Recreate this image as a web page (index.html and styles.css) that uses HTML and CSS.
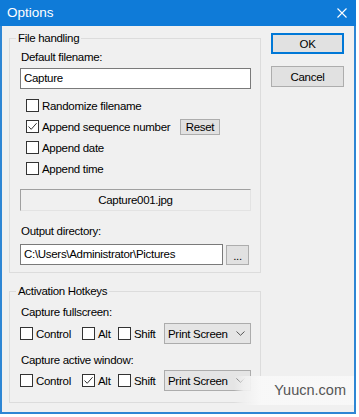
FILE: index.html
```html
<!DOCTYPE html>
<html lang="en">
<head>
<meta charset="UTF-8">
<title>Options</title>
<link rel="stylesheet" href="styles.css">
</head>
<body>
    <div class="window">
        <div class="titlebar">
            <span class="title">Options</span>
            <svg class="close" width="10" height="10" viewBox="0 0 10 10"><path d="M0.5 0.5 L9.5 9.5 M9.5 0.5 L0.5 9.5" stroke="#fff" stroke-width="1.1" fill="none"/></svg>
        </div>
        <div class="client">
            <div class="main">
                <fieldset class="group group-file">
                    <legend>File handling</legend>
                    <div class="label">Default filename:</div>
                    <div class="textbox">Capture</div>
                    <div class="options">
                        <div class="check-row"><span class="checkbox"></span><span>Randomize filename</span></div>
                        <div class="check-row"><span class="checkbox"><svg width="11" height="11" viewBox="0 0 11 11"><path d="M1.5 5.5 L4.2 8.3 L9.6 2.2" stroke="#333" stroke-width="1" fill="none"/></svg></span><span class="seq-label">Append sequence number</span><span class="btn btn-reset">Reset</span></div>
                        <div class="check-row"><span class="checkbox"></span><span>Append date</span></div>
                        <div class="check-row"><span class="checkbox"></span><span>Append time</span></div>
                    </div>
                    <div class="preview">Capture001.jpg</div>
                    <div class="label label-dir">Output directory:</div>
                    <div class="dir-row">
                        <div class="textbox textbox-dir">C:\Users\Administrator\Pictures</div>
                        <span class="btn btn-browse">...</span>
                    </div>
                </fieldset>
                <fieldset class="group group-keys">
                    <legend>Activation Hotkeys</legend>
                    <div class="label">Capture fullscreen:</div>
                    <div class="key-row">
                        <div class="key key-ctrl"><span class="checkbox"></span><span>Control</span></div>
                        <div class="key key-alt"><span class="checkbox"></span><span>Alt</span></div>
                        <div class="key key-shift"><span class="checkbox"></span><span>Shift</span></div>
                        <div class="combo"><span>Print Screen</span><svg width="9" height="5" viewBox="0 0 9 5"><path d="M0.5 0.5 L4.5 4.3 L8.5 0.5" stroke="#555" stroke-width="1" fill="none"/></svg></div>
                    </div>
                    <div class="label label-second">Capture active window:</div>
                    <div class="key-row key-row-second">
                        <div class="key key-ctrl"><span class="checkbox"></span><span>Control</span></div>
                        <div class="key key-alt"><span class="checkbox"><svg width="11" height="11" viewBox="0 0 11 11"><path d="M1.5 5.5 L4.2 8.3 L9.6 2.2" stroke="#333" stroke-width="1" fill="none"/></svg></span><span>Alt</span></div>
                        <div class="key key-shift"><span class="checkbox"></span><span>Shift</span></div>
                        <div class="combo"><span>Print Screen</span><svg width="9" height="5" viewBox="0 0 9 5"><path d="M0.5 0.5 L4.5 4.3 L8.5 0.5" stroke="#555" stroke-width="1" fill="none"/></svg></div>
                    </div>
                </fieldset>
            </div>
            <div class="side">
                <div class="btn btn-dialog btn-default">OK</div>
                <div class="btn btn-dialog">Cancel</div>
            </div>
        </div>
        <div class="watermark">Yuucn.com</div>
    </div>
</body>
</html>
```

FILE: styles.css
```css
body {
    margin: 0;
    padding: 0;
    background: #fff;
    font-family: "Liberation Sans", Arial, sans-serif;
    font-size: 11.5px;
    letter-spacing: -0.3px;
    color: #000;
}
.window {
    position: relative;
    width: 356px;
    height: 414px;
    box-sizing: border-box;
    background: #f0f0f0;
    border: 2px solid #2e86d4;
    border-top: none;
}
.titlebar {
    height: 26px;
    margin: 0 -2px;
    background: #0f7bd8;
    display: flex;
    align-items: center;
    justify-content: space-between;
    padding: 0 9px 0 7px;
}
.title {
    color: #fff;
    font-size: 13.5px;
    letter-spacing: 0;
    padding-bottom: 1px;
}
.close {
    margin-bottom: 1px;
}
.client {
    display: flex;
    padding: 5px 0 0 7px;
}
.main {
    width: 252px;
}
.group {
    margin: 0;
    min-width: 0;
    border: 1px solid #dcdcdc;
    padding: 4px 9px 7px 10px;
}
.group legend {
    padding: 0 2px;
    margin-left: -4px;
    line-height: 14px;
}
.label {
    line-height: 16px;
    padding-left: 1px;
}
.textbox {
    margin-top: 3px;
    height: 21px;
    box-sizing: border-box;
    border: 1px solid #7a7a7a;
    background: #fff;
    line-height: 19px;
    padding-left: 3px;
}
.options {
    margin-top: 6px;
    padding-left: 6px;
}
.check-row {
    display: flex;
    align-items: center;
    height: 21px;
}
.checkbox {
    width: 13px;
    height: 13px;
    box-sizing: border-box;
    border: 1px solid #333;
    background: #fff;
    margin-right: 3px;
    display: flex;
    align-items: center;
    justify-content: center;
    flex-shrink: 0;
}
.btn {
    box-sizing: border-box;
    background: #e1e1e1;
    border: 1px solid #adadad;
    display: flex;
    align-items: center;
    justify-content: center;
}
.seq-label {
    width: 138px;
}
.btn-reset {
    width: 40px;
    height: 16px;
}
.preview {
    margin-top: 10px;
    height: 22px;
    box-sizing: border-box;
    border: 1px solid;
    border-color: #a0a0a0 #e3e3e3 #e3e3e3 #a0a0a0;
    text-align: center;
    line-height: 20px;
}
.label-dir {
    margin-top: 12px;
}
.dir-row {
    display: flex;
    align-items: center;
    margin-top: 5px;
}
.textbox-dir {
    margin-top: 0;
    width: 203px;
}
.btn-browse {
    width: 23px;
    height: 20px;
    margin-left: 3px;
    padding-top: 2px;
}
.group-keys {
    margin-top: 11px;
    padding: 6px 9px 11px 10px;
}
.key-row {
    display: flex;
    align-items: center;
    height: 21px;
    margin-top: 3px;
}
.key {
    display: flex;
    align-items: center;
}
.key-ctrl {
    width: 62px;
}
.key-alt {
    width: 36px;
}
.key-shift {
    width: 46px;
}
.combo {
    width: 87px;
    height: 21px;
    box-sizing: border-box;
    background: #e5e5e5;
    border: 1px solid #acacac;
    display: flex;
    align-items: center;
    justify-content: space-between;
    padding: 0 5px 0 3px;
}
.label-second {
    margin-top: 8px;
}
.key-row-second {
    margin-top: 2px;
}
.side {
    margin-left: 10px;
    padding-top: 2px;
}
.btn-dialog {
    width: 73px;
    height: 21px;
    margin-bottom: 12px;
}
.btn-default {
    border: 2px solid #0078d7;
}
.watermark {
    position: absolute;
    left: 232px;
    top: 376px;
    width: 120px;
    height: 29px;
    background: linear-gradient(to right, rgba(236, 236, 236, 0), rgba(240, 240, 240, 0.9) 8%, rgba(248, 248, 248, 0.97) 22%);
    color: #555;
    font-size: 14.5px;
    letter-spacing: 0;
    text-align: right;
    line-height: 29px;
    padding-right: 8px;
    box-sizing: border-box;
}
```
